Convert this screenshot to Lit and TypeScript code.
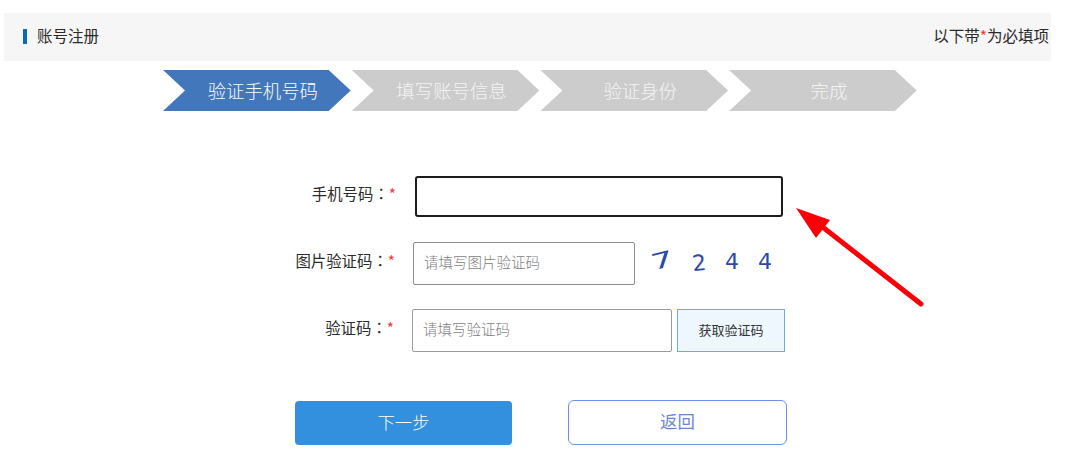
import { LitElement, html, css, svg } from "lit";
import { customElement } from "lit/decorators.js";

@customElement("app-root")
export class AppRoot extends LitElement {
  static styles = css`
    :host {
      display: block;
      position: relative;
      box-sizing: border-box;
      width: 1080px;
      height: 461px;
      padding: 13px 29px 0 4px;
      background: #fff;
      overflow: hidden;
      font-family: "Noto Sans CJK SC", "Noto Sans", sans-serif;
      color: #2a2a2a;
    }
    .head {
      display: flex;
      align-items: center;
      justify-content: space-between;
      box-sizing: border-box;
      height: 48px;
      padding: 0 2px 1px 19px;
      background: #f6f6f6;
      font-size: 15.5px;
    }
    .title {
      display: flex;
      align-items: center;
      gap: 10px;
    }
    .title i {
      display: block;
      width: 4px;
      height: 15px;
      background: #0b68bb;
    }
    .title span, .note {
      padding-bottom: 3px;
    }
    .req {
      color: #f03b3b;
    }
    .steps {
      display: flex;
      gap: 1px;
      margin: 9px 0 0 159px;
    }
    .step {
      display: flex;
      align-items: center;
      justify-content: center;
      box-sizing: border-box;
      width: 187.7px;
      height: 41px;
      padding: 0 0 2px 12px;
      font-size: 18.4px;
      font-weight: 300;
      color: #f4f4f4;
      background: #cccccc;
      clip-path: polygon(0 0, calc(100% - 22px) 0, 100% 50%, calc(100% - 22px) 100%, 0 100%, 22px 50%);
    }
    .step.on {
      background: #4277bc;
      color: #fbfdff;
    }
    .form {
      margin-top: 65px;
    }
    .row {
      display: flex;
      align-items: center;
      margin-bottom: 24px;
    }
    .r1 { padding-left: 2px; margin-bottom: 25px; }
    .r2 { padding-left: 1px; }
    .label {
      box-sizing: border-box;
      width: 390px;
      padding-bottom: 8px;
      text-align: right;
      font-size: 15.4px;
      line-height: 20px;
    }
    .r1 .label { margin-right: 19px; }
    .r2 .label, .r3 .label { margin-right: 18px; }
    .label span {
      color: #f03b3b;
    }
    .label .colon {
      color: inherit;
      font-family: "Noto Sans CJK TC", sans-serif;
    }
    input {
      display: block;
      box-sizing: border-box;
      margin: 0;
      outline: none;
      background: #fff;
      font-family: inherit;
      font-size: 14.5px;
      font-weight: 300;
      color: #333;
      padding: 0 10px 4px 10px;
      border-radius: 2px;
    }
    input::placeholder {
      color: #7e7e7e;
      opacity: 1;
    }
    .focus {
      width: 368px;
      height: 41px;
      border: 2px solid #1c1c1c;
      border-radius: 3px;
    }
    .short {
      width: 222px;
      height: 43px;
      border: 1px solid #8e8e8e;
    }
    .mid {
      width: 260px;
      height: 43px;
      border: 1px solid #9a9a9a;
    }
    .captcha {
      display: flex;
      align-items: center;
      gap: 19px;
      margin-left: 20px;
      padding-bottom: 6px;
      font-family: "DejaVu Sans", sans-serif;
      font-size: 22px;
      color: #2c4aa6;
    }
    .captcha span:nth-child(1) { transform: rotate(-14deg) scaleX(1.6); }
    .captcha span:nth-child(2) { transform: rotate(-6deg) translate(4px, 3px); }
    .captcha span:nth-child(3) { transform: translate(4px, 1px); }
    .captcha span:nth-child(4) { transform: translate(4px, 1px); }
    .get {
      box-sizing: border-box;
      width: 108px;
      height: 43px;
      margin-left: 5px;
      padding: 0 0 3px;
      background: #eff7fe;
      border: 1px solid #6aade4;
      color: #333;
      font-family: inherit;
      font-size: 13px;
    }
    .actions {
      display: flex;
      align-items: flex-start;
      margin: 48px 0 0 291px;
    }
    .btn {
      box-sizing: border-box;
      padding: 0 0 4px;
      font-family: inherit;
      font-size: 17.4px;
      border-radius: 4px;
    }
    .next {
      width: 217px;
      height: 44px;
      margin-top: 1px;
      border: none;
      background: #3290de;
      color: #fff;
      font-weight: 300;
    }
    .back {
      width: 219px;
      height: 45px;
      margin-left: 56px;
      background: #fff;
      border: 1px solid #6b90e6;
      color: #6a86d8;
      border-radius: 6px;
    }
    .arrow {
      position: absolute;
      left: 0;
      top: 0;
      width: 1080px;
      height: 461px;
      pointer-events: none;
    }
  `;

  render() {
    return html`
      <div class="head">
        <div class="title"><i></i><span>账号注册</span></div>
        <div class="note">以下带<span class="req">*</span>为必填项</div>
      </div>
      <div class="steps">
        <div class="step on">验证手机号码</div>
        <div class="step">填写账号信息</div>
        <div class="step">验证身份</div>
        <div class="step">完成</div>
      </div>
      <div class="form">
        <div class="row r1">
          <div class="label">手机号码<span class="colon">：</span><span>*</span></div>
          <input class="focus" type="text" />
        </div>
        <div class="row r2">
          <div class="label">图片验证码<span class="colon">：</span><span>*</span></div>
          <input class="short" type="text" placeholder="请填写图片验证码" />
          <div class="captcha"><span>7</span><span>2</span><span>4</span><span>4</span></div>
        </div>
        <div class="row r3">
          <div class="label">验证码<span class="colon">：</span><span>*</span></div>
          <input class="mid" type="text" placeholder="请填写验证码" />
          <button class="get">获取验证码</button>
        </div>
      </div>
      <div class="actions">
        <button class="btn next">下一步</button>
        <button class="btn back">返回</button>
      </div>
      <svg class="arrow" viewBox="0 0 1080 461">
        ${svg`<line x1="921" y1="304" x2="820" y2="225" stroke="#fb0007" stroke-width="5" stroke-linecap="round"></line>
        <polygon points="796,208 830,220 816,238" fill="#fb0007"></polygon>`}
      </svg>
    `;
  }
}
